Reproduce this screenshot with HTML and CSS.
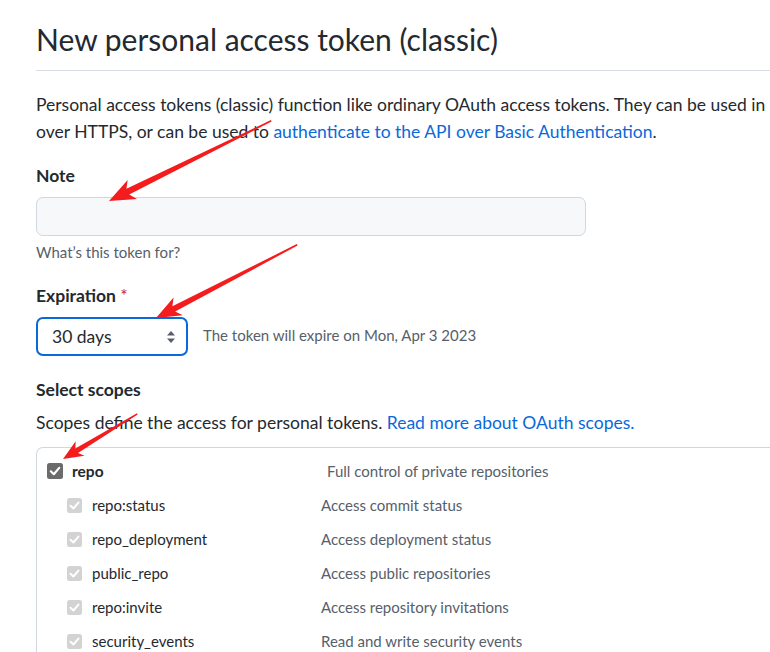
FILE: index.html
```html
<!DOCTYPE html>
<html>
<head>
<meta charset="utf-8">
<link rel="stylesheet" href="styles.css">
</head>
<body>
<div class="page">
  <h1 class="subhead">New personal access token (classic)</h1>
  <p class="intro">Personal access tokens (classic) function like ordinary OAuth access tokens. They can be used in<br>over HTTPS, or can be used to <a href="#">authenticate to the API over Basic Authentication</a>.</p>

  <div class="group">
    <div class="label">Note</div>
    <div class="input"></div>
    <div class="hint">What’s this token for?</div>
  </div>

  <div class="group">
    <div class="label">Expiration <span class="req">*</span></div>
    <div class="expiry-row">
      <div class="select">
        <span>30 days</span>
        <svg class="updown" width="10" height="14" viewBox="0 0 10 14"><path d="M1 5.5 L5 1 L9 5.5 Z M1 8.5 L5 13 L9 8.5 Z" fill="#57606a"/></svg>
      </div>
      <span class="expiry-note">The token will expire on Mon, Apr 3 2023</span>
    </div>
  </div>

  <div class="group scopes-group">
    <div class="label">Select scopes</div>
    <p class="scopes-desc">Scopes define the access for personal tokens. <a href="#">Read more about OAuth scopes.</a></p>
    <div class="scope-box">
      <div class="row top">
        <svg class="cb" width="16" height="16" viewBox="0 0 16 16"><rect x="0" y="0" width="16" height="16" rx="2.5" fill="#6b6b6b"/><path d="M3.8 8.3 L6.8 11.2 L12.2 4.9" fill="none" stroke="#fff" stroke-width="2.2" stroke-linecap="round" stroke-linejoin="round"/></svg>
        <span class="name">repo</span>
        <span class="desc">Full control of private repositories</span>
      </div>
      <div class="row sub">
        <svg class="cb" width="15" height="15" viewBox="0 0 15 15"><rect x="0" y="0" width="15" height="15" rx="2.5" fill="#d3d3d3"/><path d="M3.5 7.8 L6.4 10.5 L11.5 4.6" fill="none" stroke="#fff" stroke-width="2" stroke-linecap="round" stroke-linejoin="round"/></svg>
        <span class="name">repo:status</span>
        <span class="desc">Access commit status</span>
      </div>
      <div class="row sub">
        <svg class="cb" width="15" height="15" viewBox="0 0 15 15"><rect x="0" y="0" width="15" height="15" rx="2.5" fill="#d3d3d3"/><path d="M3.5 7.8 L6.4 10.5 L11.5 4.6" fill="none" stroke="#fff" stroke-width="2" stroke-linecap="round" stroke-linejoin="round"/></svg>
        <span class="name">repo_deployment</span>
        <span class="desc">Access deployment status</span>
      </div>
      <div class="row sub">
        <svg class="cb" width="15" height="15" viewBox="0 0 15 15"><rect x="0" y="0" width="15" height="15" rx="2.5" fill="#d3d3d3"/><path d="M3.5 7.8 L6.4 10.5 L11.5 4.6" fill="none" stroke="#fff" stroke-width="2" stroke-linecap="round" stroke-linejoin="round"/></svg>
        <span class="name">public_repo</span>
        <span class="desc">Access public repositories</span>
      </div>
      <div class="row sub">
        <svg class="cb" width="15" height="15" viewBox="0 0 15 15"><rect x="0" y="0" width="15" height="15" rx="2.5" fill="#d3d3d3"/><path d="M3.5 7.8 L6.4 10.5 L11.5 4.6" fill="none" stroke="#fff" stroke-width="2" stroke-linecap="round" stroke-linejoin="round"/></svg>
        <span class="name">repo:invite</span>
        <span class="desc">Access repository invitations</span>
      </div>
      <div class="row sub">
        <svg class="cb" width="15" height="15" viewBox="0 0 15 15"><rect x="0" y="0" width="15" height="15" rx="2.5" fill="#d3d3d3"/><path d="M3.5 7.8 L6.4 10.5 L11.5 4.6" fill="none" stroke="#fff" stroke-width="2" stroke-linecap="round" stroke-linejoin="round"/></svg>
        <span class="name">security_events</span>
        <span class="desc">Read and write security events</span>
      </div>
    </div>
  </div>
</div>

<svg class="arrows" width="770" height="652" viewBox="0 0 770 652">
  <g transform="translate(109 201) rotate(-26.3)" fill="#f41c1c">
    <polygon points="0,0 26,-10.5 21,-3.2 181,-0.8 181,0.8 21,3.2 26,10.5"/>
  </g>
  <g transform="translate(156 318) rotate(-27.4)" fill="#f41c1c">
    <polygon points="0,0 25,-10 20,-3 159,-0.8 159,0.8 20,3 25,10"/>
  </g>
  <g transform="translate(63 459) rotate(-31.3)" fill="#f41c1c">
    <polygon points="0,0 20,-8.5 16,-2.6 87,-0.7 87,0.7 16,2.6 20,8.5"/>
  </g>
</svg>
</body>
</html>
```

FILE: styles.css
```css
html, body {
  margin: 0;
  padding: 0;
}
body {
  width: 770px;
  height: 652px;
  overflow: hidden;
  position: relative;
  background: #fff;
  color: #24292f;
  font-family: "Lato", "Liberation Sans", sans-serif;
}
.page {
  width: 1100px;
  padding-left: 36px;
  box-sizing: border-box;
}
.subhead {
  margin: 20px 0 0 0;
  font-size: 30px;
  font-weight: 400;
  line-height: 38px;
  padding-bottom: 12px;
  border-bottom: 1px solid #d8dee4;
}
.intro {
  margin: 20px 0 0 0;
  font-size: 17.5px;
  line-height: 27px;
  white-space: nowrap;
}
a {
  color: #0969da;
  text-decoration: none;
}
.group {
  margin-top: 18px;
}
.group + .group {
  margin-top: 21px;
}
.label {
  font-size: 17.5px;
  font-weight: 700;
  line-height: 26px;
}
.req {
  color: #cf222e;
  font-weight: 400;
}
.input {
  margin-top: 8px;
  width: 550px;
  height: 39px;
  box-sizing: border-box;
  background: #f6f8fa;
  border: 1px solid #d0d7de;
  border-radius: 7px;
}
.hint {
  margin-top: 6px;
  font-size: 15px;
  line-height: 20px;
  color: #57606a;
}
.expiry-row {
  margin-top: 8px;
  display: flex;
  align-items: center;
}
.select {
  width: 152px;
  height: 39px;
  box-sizing: border-box;
  border: 2px solid #0969da;
  border-radius: 7px;
  display: flex;
  align-items: center;
  justify-content: space-between;
  padding: 0 10px 0 14px;
  font-size: 17.5px;
}
.updown {
  display: block;
}
.expiry-note {
  margin-left: 15px;
  font-size: 15px;
  color: #57606a;
  padding-bottom: 4px;
}
.scopes-group .label {
  line-height: 26px;
}
.scopes-desc {
  margin: 6px 0 0 0;
  font-size: 17.5px;
  line-height: 27px;
}
.scope-box {
  margin-top: 11px;
  width: 900px;
  border: 1px solid #d0d7de;
  border-right: none;
  border-top-left-radius: 7px;
  padding-top: 6px;
  padding-bottom: 20px;
}
.row {
  display: flex;
  align-items: center;
  height: 34px;
  font-size: 15px;
}
.row .cb {
  display: block;
  flex: none;
}
.row.top {
  padding-left: 10px;
}
.row.top .name {
  margin-left: 9px;
  width: 255px;
  font-weight: 700;
  font-size: 15.5px;
}
.row.sub {
  padding-left: 30px;
}
.row.sub .name {
  margin-left: 10px;
  width: 229px;
}
.desc {
  color: #57606a;
}
.arrows {
  position: absolute;
  left: 0;
  top: 0;
  pointer-events: none;
}
```
